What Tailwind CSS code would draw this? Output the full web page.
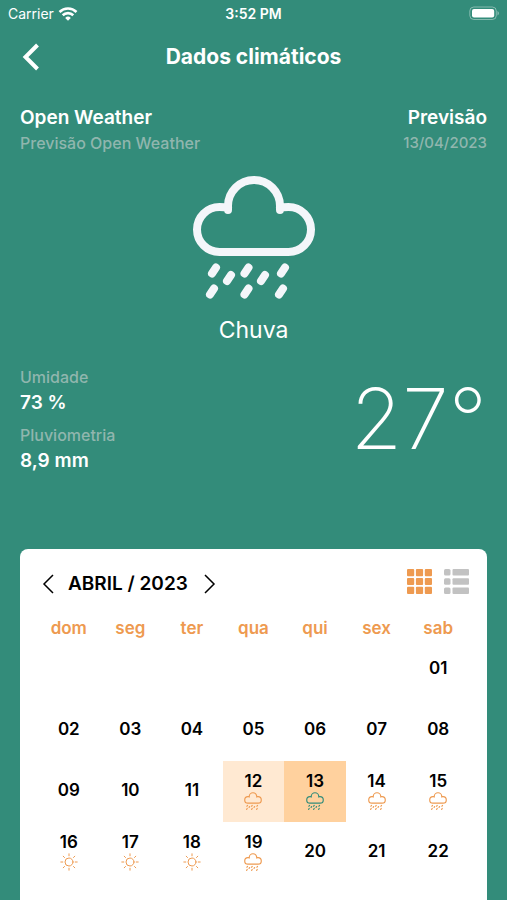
<!DOCTYPE html>
<html lang="pt-BR">

<head>
    <meta charset="UTF-8" />
    <meta name="viewport" content="width=device-width, initial-scale=1" />
    <title>Dados climáticos</title>
    <script src="https://cdn.jsdelivr.net/npm/@tailwindcss/browser@4"></script>
</head>

<body class="bg-[#338c7a] text-white font-[Inter,sans-serif] flex flex-col min-h-screen">
    <!-- Shared icons -->
    <svg class="hidden">
        <symbol id="rain" viewBox="0 0 124 124">
            <g fill="none" stroke="currentColor" stroke-width="8" stroke-linecap="round" stroke-linejoin="round">
                <path d="M36 35v-4a26 26 0 0 1 52 0v4M88 33c3-1 6-1 8.500-1a22.500 22.500 0 0 1 0 45h-69a22.500 22.500 0 0 1 0-45c3 0 5.500 0 8.500 1" />
                <path d="M24 92.500l-4 6M39 100l-4 6M56.500 92.500l-4 6M73 100l-4 6M93 92.500l-4 6M22 113.500l-4 6M56.500 113.500l-4 6M91 113.500l-4 6" />
            </g>
        </symbol>
        <symbol id="sun" viewBox="0 0 18 18">
            <g fill="none" stroke="currentColor" stroke-linecap="round">
                <circle cx="9" cy="9" r="4" />
                <path d="M9 .8v2M9 15.200v2M.8 9h2M15.200 9h2M3.200 3.200l1.300 1.300M13.500 13.500l1.300 1.300M3.200 14.800l1.300-1.300M13.500 4.500l1.300-1.300" />
            </g>
        </symbol>
    </svg>

    <!-- Status bar -->
    <div class="grid grid-cols-3 items-center h-7 px-2 text-sm">
        <div class="flex items-center gap-1">
            <span>Carrier</span>
            <svg class="w-5 h-4" viewBox="0 0 20 16" fill="none" stroke="currentColor" stroke-width="2.6">
                <path d="M1.500 6a12.200 12.200 0 0 1 17 0M4.700 9.300a7.600 7.600 0 0 1 10.600 0" />
                <path d="M10 14.800l-2.800-2.900a4 4 0 0 1 5.600 0z" fill="currentColor" stroke="none" />
            </svg>
        </div>
        <span class="text-center font-semibold">3:52 PM</span>
        <svg class="w-[30px] h-4 justify-self-end" viewBox="0 0 30 16">
            <rect x=".8" y="1" width="26.500" height="12.500" rx="4" fill="none" stroke="#fff" stroke-opacity=".4" />
            <rect x="3" y="3" width="22.200" height="8.500" rx="2" fill="#fff" />
            <path d="M28.500 5c1.800.8 1.800 3.700 0 4.500z" fill="#fff" fill-opacity=".45" />
        </svg>
    </div>

    <header class="grid grid-cols-[40px_1fr_40px] items-center h-[58px] px-5">
        <button type="button" aria-label="Voltar" class="w-10 h-10 flex items-center">
            <svg class="w-5 h-7" viewBox="0 0 20 28" fill="none" stroke="currentColor" stroke-width="4">
                <path d="M17.500 2L5.500 14l12 12" />
            </svg>
        </button>
        <h1 class="text-center text-[21px] leading-7 font-bold">Dados climáticos</h1>
    </header>

    <main class="flex flex-col flex-1 px-5">
        <section class="flex justify-between pt-5">
            <div>
                <h2 class="text-[19px] leading-6 font-semibold">Open Weather</h2>
                <p class="text-base leading-[26px] font-medium text-[#90b6ae]">Previsão Open Weather</p>
            </div>
            <div class="text-right">
                <h2 class="text-[19px] leading-6 font-semibold">Previsão</h2>
                <p class="text-[15px] leading-[26px] font-medium text-[#90b6ae]">13/04/2023</p>
            </div>
        </section>

        <section class="flex flex-col items-center pt-[19px]">
            <svg class="w-31 h-31 text-[#f4f6fa]">
                <use href="#rain" />
            </svg>
            <p class="text-[23px] leading-8 pt-[15px]">Chuva</p>
        </section>

        <section class="flex justify-between items-center pt-[19px]">
            <dl>
                <dt class="text-base leading-6 font-medium text-[#90b6ae]">Umidade</dt>
                <dd class="text-[19px] leading-7 font-semibold mb-1">73 %</dd>
                <dt class="text-base leading-7 font-medium text-[#90b6ae]">Pluviometria</dt>
                <dd class="text-[19px] leading-6 font-semibold">8,9 mm</dd>
            </dl>
            <p class="text-[84px] leading-none font-extralight">27°</p>
        </section>

        <!-- Calendar -->
        <section class="flex-1 bg-white text-black rounded-t-lg mt-19 px-[18px] pt-[17px]">
            <div class="flex items-center justify-between h-9">
                <div class="flex items-center">
                    <button type="button" aria-label="Mês anterior" class="w-5 h-8 flex items-center justify-center">
                        <svg class="w-3 h-5" viewBox="0 0 12 20" fill="none" stroke="currentColor" stroke-width="1.5">
                            <path d="M11 1L2 10l9 9" />
                        </svg>
                    </button>
                    <h2 class="text-[19px] leading-7 font-semibold px-[10px]">ABRIL / 2023</h2>
                    <button type="button" aria-label="Próximo mês" class="w-6 h-8 flex items-center justify-center">
                        <svg class="w-3 h-5" viewBox="0 0 12 20" fill="none" stroke="currentColor" stroke-width="1.5">
                            <path d="M1 1l9 9-9 9" />
                        </svg>
                    </button>
                </div>
                <div class="flex gap-3 self-start pt-[3px]">
                    <button type="button" aria-label="Ver em grade" class="text-[#ee9a50]">
                        <svg class="w-[25px] h-[25px]" viewBox="0 0 25 25" fill="currentColor">
                            <rect width="7.200" height="7.200" rx="1" />
                            <rect x="8.900" width="7.200" height="7.200" rx="1" />
                            <rect x="17.800" width="7.200" height="7.200" rx="1" />
                            <rect y="8.900" width="7.200" height="7.200" rx="1" />
                            <rect x="8.900" y="8.900" width="7.200" height="7.200" rx="1" />
                            <rect x="17.800" y="8.900" width="7.200" height="7.200" rx="1" />
                            <rect y="17.800" width="7.200" height="7.200" rx="1" />
                            <rect x="8.900" y="17.800" width="7.200" height="7.200" rx="1" />
                            <rect x="17.800" y="17.800" width="7.200" height="7.200" rx="1" />
                        </svg>
                    </button>
                    <button type="button" aria-label="Ver em lista" class="text-[#c2c2c2]">
                        <svg class="w-[25px] h-[25px]" viewBox="0 0 25 25" fill="currentColor">
                            <rect width="6.500" height="6.500" rx="1.500" />
                            <rect x="8.500" width="16.500" height="6.500" rx="1" />
                            <rect y="9.200" width="6.500" height="6.500" rx="1.500" />
                            <rect x="8.500" y="9.200" width="16.500" height="6.500" rx="1" />
                            <rect y="18.400" width="6.500" height="6.500" rx="1.500" />
                            <rect x="8.500" y="18.400" width="16.500" height="6.500" rx="1" />
                        </svg>
                    </button>
                </div>
            </div>

            <table class="w-full table-fixed mt-[15px]">
                <thead>
                    <tr class="h-[22px] text-[17px] leading-5 text-[#ee9a50]">
                        <th class="p-0 font-semibold">dom</th>
                        <th class="p-0 font-semibold">seg</th>
                        <th class="p-0 font-semibold">ter</th>
                        <th class="p-0 font-semibold">qua</th>
                        <th class="p-0 font-semibold">qui</th>
                        <th class="p-0 font-semibold">sex</th>
                        <th class="p-0 font-semibold">sab</th>
                    </tr>
                </thead>
                <tbody id="days"></tbody>
            </table>
        </section>
    </main>

    <script>
        const days = document.getElementById('days');
        const today = 12;
        let selected = 13;

        const forecast = {
            12: 'rain', 13: 'rain', 14: 'rain', 15: 'rain',
            16: 'sun', 17: 'sun', 18: 'sun', 19: 'rain'
        };

        const weeks = [
            [0, 0, 0, 0, 0, 0, 1],
            [2, 3, 4, 5, 6, 7, 8],
            [9, 10, 11, 12, 13, 14, 15],
            [16, 17, 18, 19, 20, 21, 22]
        ];

        function renderDay(day) {
            if (!day) return '<td></td>';
            let bg = '';
            if (day === today) bg = 'bg-[#ffe9d2]';
            if (day === selected) bg = 'bg-[#ffd19e]';
            const color = day === selected ? 'text-[#338c7a]' : 'text-[#ee9a50]';
            const icon = forecast[day]
                ? `<svg class="w-[18px] h-[18px] ${color}"><use href="#${forecast[day]}" /></svg>`
                : '';
            return `
                <td class="p-0 ${bg}">
                    <button type="button" onclick="selectDay(${day})"
                        class="w-full h-[61px] pb-[3px] flex flex-col items-center justify-center text-[17px] leading-[21px] font-semibold">
                        ${String(day).padStart(2, '0')}
                        ${icon}
                    </button>
                </td>`;
        }

        function renderCalendar() {
            days.innerHTML = weeks.map(week =>
                `<tr class="h-[61px]">${week.map(renderDay).join('')}</tr>`
            ).join('');
        }

        function selectDay(day) {
            selected = day;
            renderCalendar();
        }

        renderCalendar();
    </script>
</body>

</html>
